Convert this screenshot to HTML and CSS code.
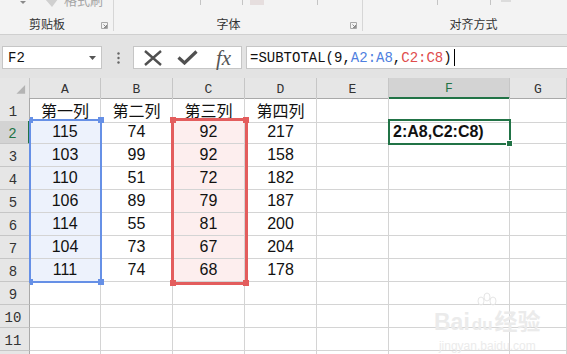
FILE: index.html
```html
<!DOCTYPE html>
<html lang="zh-CN">
<head>
    <meta charset="UTF-8">
    <meta name="viewport" content="width=device-width, initial-scale=1.0">
    <title>SUBTOTAL</title>
    <link rel="stylesheet" href="styles.css">
</head>
<body>
    <div class="ribbon">
        <div class="group clip">
            <div class="tools">
                <svg class="caret" width="6" height="4" viewBox="0 0 6 4"><path d="M0 0h6L3 3z" fill="#8a8a8a"/></svg>
                <svg class="brush" width="17" height="9" viewBox="0 0 17 9"><path d="M2 0h13L9 8z" fill="#d0d0d0"/></svg>
                <span class="cut-text">格式刷</span>
            </div>
            <div class="glabel">
                <span class="gname">剪贴板</span>
                <svg class="launcher" width="7" height="7" viewBox="0 0 7 7"><path d="M0.5 6.5V0.5h6v6z" fill="none" stroke="#a8a8a8"/><path d="M2.5 2.5l3 3M5.5 3v2.5H3" fill="none" stroke="#8a8a8a"/></svg>
            </div>
        </div>
        <div class="group font">
            <div class="tools">
                <span class="tick" style="margin-left: 86px"></span>
                <span class="tick" style="margin-left: 41px"></span>
                <span class="swatch"></span>
                <span class="tick" style="margin-left: 53px"></span>
            </div>
            <div class="glabel">
                <span class="gname">字体</span>
                <svg class="launcher" width="7" height="7" viewBox="0 0 7 7"><path d="M0.5 6.5V0.5h6v6z" fill="none" stroke="#a8a8a8"/><path d="M2.5 2.5l3 3M5.5 3v2.5H3" fill="none" stroke="#8a8a8a"/></svg>
            </div>
        </div>
        <div class="group align">
            <div class="tools">
                <span class="tick" style="margin-left: 74px"></span>
                <span class="tick" style="margin-left: 52px"></span>
                <span class="swatch grey"></span>
            </div>
            <div class="glabel">
                <span class="gname">对齐方式</span>
            </div>
        </div>
    </div>

    <div class="fbar">
        <div class="namebox">
            <span>F2</span>
            <svg width="7" height="4" viewBox="0 0 7 4"><path d="M0 0h7L3.5 4z" fill="#555"/></svg>
        </div>
        <svg class="dots" width="3" height="12" viewBox="0 0 3 12"><circle cx="1.5" cy="1.5" r="1.2" fill="#666"/><circle cx="1.5" cy="6" r="1.2" fill="#666"/><circle cx="1.5" cy="10.5" r="1.2" fill="#666"/></svg>
        <div class="fxbox">
            <svg class="ico-x" width="20" height="16" viewBox="0 0 20 16"><path d="M2 1l16 14M18 1L2 15" stroke="#505050" stroke-width="2.4" fill="none"/></svg>
            <svg class="ico-ok" width="21" height="15" viewBox="0 0 21 15"><path d="M1.5 7.5l6 5.5L19.5 1.5" stroke="#505050" stroke-width="3.2" fill="none"/></svg>
            <span class="fx">fx</span>
        </div>
        <div class="finput">
            <span>=SUBTOTAL(9,<span class="ref-blue">A2:A8</span>,<span class="ref-red">C2:C8</span>)</span><span class="caret-line"></span>
        </div>
    </div>

    <div class="sheet">
        <div class="row head">
            <div class="cell corner">
                <svg width="30" height="20" viewBox="0 0 30 20"><path d="M26 7v9h-9z" fill="#b4b4b4"/></svg>
            </div>
            <div class="cell ch">A</div>
            <div class="cell ch">B</div>
            <div class="cell ch">C</div>
            <div class="cell ch">D</div>
            <div class="cell ch">E</div>
            <div class="cell ch sel">F</div>
            <div class="cell ch">G</div>
        </div>
        <div class="row">
            <div class="cell rh">1</div>
            <div class="cell">第一列</div>
            <div class="cell">第二列</div>
            <div class="cell">第三列</div>
            <div class="cell">第四列</div>
            <div class="cell"></div>
            <div class="cell"></div>
            <div class="cell"></div>
        </div>
        <div class="row">
            <div class="cell rh sel">2</div>
            <div class="cell blue">115</div>
            <div class="cell">74</div>
            <div class="cell red">92</div>
            <div class="cell">217</div>
            <div class="cell"></div>
            <div class="cell edit">2:A8,C2:C8)</div>
            <div class="cell"></div>
        </div>
        <div class="row">
            <div class="cell rh">3</div>
            <div class="cell blue">103</div>
            <div class="cell">99</div>
            <div class="cell red">92</div>
            <div class="cell">158</div>
            <div class="cell"></div>
            <div class="cell"></div>
            <div class="cell"></div>
        </div>
        <div class="row">
            <div class="cell rh">4</div>
            <div class="cell blue">110</div>
            <div class="cell">51</div>
            <div class="cell red">72</div>
            <div class="cell">182</div>
            <div class="cell"></div>
            <div class="cell"></div>
            <div class="cell"></div>
        </div>
        <div class="row">
            <div class="cell rh">5</div>
            <div class="cell blue">106</div>
            <div class="cell">89</div>
            <div class="cell red">79</div>
            <div class="cell">187</div>
            <div class="cell"></div>
            <div class="cell"></div>
            <div class="cell"></div>
        </div>
        <div class="row">
            <div class="cell rh">6</div>
            <div class="cell blue">114</div>
            <div class="cell">55</div>
            <div class="cell red">81</div>
            <div class="cell">200</div>
            <div class="cell"></div>
            <div class="cell"></div>
            <div class="cell"></div>
        </div>
        <div class="row">
            <div class="cell rh">7</div>
            <div class="cell blue">104</div>
            <div class="cell">73</div>
            <div class="cell red">67</div>
            <div class="cell">204</div>
            <div class="cell"></div>
            <div class="cell"></div>
            <div class="cell"></div>
        </div>
        <div class="row">
            <div class="cell rh">8</div>
            <div class="cell blue">111</div>
            <div class="cell">74</div>
            <div class="cell red">68</div>
            <div class="cell">178</div>
            <div class="cell"></div>
            <div class="cell"></div>
            <div class="cell"></div>
        </div>
        <div class="row">
            <div class="cell rh">9</div>
            <div class="cell"></div><div class="cell"></div><div class="cell"></div><div class="cell"></div>
            <div class="cell"></div><div class="cell"></div><div class="cell"></div>
        </div>
        <div class="row">
            <div class="cell rh">10</div>
            <div class="cell"></div><div class="cell"></div><div class="cell"></div><div class="cell"></div>
            <div class="cell"></div><div class="cell"></div><div class="cell"></div>
        </div>
        <div class="row">
            <div class="cell rh">11</div>
            <div class="cell"></div><div class="cell"></div><div class="cell"></div><div class="cell"></div>
            <div class="cell"></div><div class="cell"></div><div class="cell"></div>
        </div>
        <div class="row">
            <div class="cell rh"></div>
            <div class="cell"></div><div class="cell"></div><div class="cell"></div><div class="cell"></div>
            <div class="cell"></div><div class="cell"></div><div class="cell"></div>
        </div>

        <!-- range highlights drawn over the grid -->
        <div class="range range-blue">
            <span class="knob tl"></span><span class="knob tr"></span>
            <span class="knob bl"></span><span class="knob br"></span>
        </div>
        <div class="range range-red">
            <span class="knob tl"></span><span class="knob tr"></span>
            <span class="knob bl"></span><span class="knob br"></span>
        </div>
        <div class="active"><span class="fill-handle"></span></div>

        <div class="watermark">
            <svg class="paw" width="30" height="18" viewBox="0 0 30 18">
                <ellipse cx="9" cy="9" rx="3" ry="4" fill="none" stroke="#e6e6e6"/>
                <ellipse cx="15" cy="5" rx="3" ry="4" fill="none" stroke="#e6e6e6"/>
                <ellipse cx="21" cy="9" rx="3" ry="4" fill="none" stroke="#e6e6e6"/>
            </svg>
            <div class="wm-logo">Bai<span class="wm-du">du</span>经验</div>
            <div class="wm-url">jingyan.baidu.com</div>
        </div>
    </div>
</body>
</html>
```

FILE: styles.css
```css
body {
    margin: 0;
    width: 567px;
    height: 354px;
    overflow: hidden;
    background-color: #fff;
    font-family: "Liberation Sans", "Noto Sans CJK SC", sans-serif;
    color: #111;
}

/* ribbon */
.ribbon {
    height: 34px;
    display: flex;
    overflow: hidden;
    background-color: #f3f3f3;
    border-bottom: 1px solid #cfcfcf;
}
.group {
    flex: none;
    height: 31px;
    display: flex;
    flex-direction: column;
}
.group.clip {
    width: 113px;
    border-right: 1px solid #d6d6d6;
}
.group.font {
    width: 248px;
    border-right: 1px solid #d6d6d6;
}
.group.align {
    width: 240px;
}
.tools {
    height: 16px;
    display: flex;
    align-items: flex-start;
}
.caret {
    margin-left: 20px;
    margin-top: 1px;
}
.brush {
    margin-left: 17px;
    margin-top: -1px;
}
.cut-text {
    margin-left: 4px;
    margin-top: -6px;
    font-size: 13px;
    line-height: 13px;
    color: #a6a6a6;
}
.tick {
    width: 1px;
    height: 5px;
    background-color: #c4c4c4;
}
.swatch {
    width: 14px;
    height: 5px;
    margin-left: 7px;
    background-color: #e6dede;
}
.swatch.grey {
    width: 10px;
    height: 2px;
    margin-left: 10px;
    background-color: #dcdcdc;
}
.glabel {
    height: 15px;
    display: grid;
    grid-template-columns: 1fr auto 1fr;
    align-items: center;
    font-size: 12px;
    line-height: 15px;
    color: #333;
}
.gname {
    grid-column: 2;
    margin-right: 19px;
    font-family: "Noto Sans CJK SC", sans-serif;
}
.launcher {
    grid-column: 3;
    justify-self: end;
    margin-right: 5px;
    margin-top: 4px;
}

/* formula bar */
.fbar {
    height: 43px;
    box-sizing: border-box;
    padding-top: 11px;
    display: flex;
    align-items: flex-start;
    background-color: #e3e3e3;
}
.namebox {
    width: 100px;
    height: 23px;
    margin-left: 2px;
    box-sizing: border-box;
    padding: 0 5px 0 5px;
    display: flex;
    align-items: center;
    justify-content: space-between;
    background-color: #fff;
    border: 1px solid #c6c6c6;
    font-family: "Liberation Mono", monospace;
    font-size: 14px;
}
.dots {
    margin-left: 15px;
    margin-top: 6px;
}
.fxbox {
    width: 109px;
    height: 23px;
    margin-left: 13px;
    box-sizing: border-box;
    display: flex;
    align-items: center;
    background-color: #fff;
    border: 1px solid #c6c6c6;
}
.ico-x {
    margin-left: 9px;
}
.ico-ok {
    margin-left: 14px;
}
.fx {
    margin-left: 18px;
    font-family: "Liberation Serif", serif;
    font-style: italic;
    font-size: 21px;
    line-height: 20px;
    color: #555;
}
.finput {
    flex: 1;
    height: 23px;
    margin-left: 4px;
    box-sizing: border-box;
    padding-left: 3px;
    display: flex;
    align-items: center;
    background-color: #fff;
    border: 1px solid #c6c6c6;
    border-right: none;
    font-family: "Liberation Mono", monospace;
    font-size: 14px;
    color: #111;
}
.ref-blue {
    color: #4f7fe0;
}
.ref-red {
    color: #e04c4c;
}
.caret-line {
    width: 1px;
    height: 17px;
    margin-left: 2px;
    background-color: #000;
}

/* sheet */
.sheet {
    position: relative;
}
.row {
    height: 23px;
    display: grid;
    grid-template-columns: 30px 71px 72px 72px 72px 72px 121px 57px;
}
.row.head {
    height: 20px;
}
.cell {
    box-sizing: border-box;
    display: flex;
    align-items: center;
    justify-content: center;
    white-space: nowrap;
    font-size: 16px;
    border-right: 1px solid #d4d4d4;
    border-bottom: 1px solid #d4d4d4;
}
.corner {
    background-color: #e6e6e6;
    border-right: 1px solid #c6c6c6;
    border-bottom: 1px solid #a9a9a9;
}
.ch {
    padding-top: 2px;
    background-color: #e6e6e6;
    border-right: 1px solid #c6c6c6;
    border-bottom: 1px solid #a9a9a9;
    font-family: "Liberation Mono", monospace;
    font-size: 13px;
    color: #333;
}
.rh {
    padding-right: 3px;
    padding-top: 3px;
    background-color: #e6e6e6;
    border-right: 1px solid #a9a9a9;
    border-bottom: 1px solid #c6c6c6;
    font-family: "Liberation Mono", monospace;
    font-size: 14px;
    color: #333;
}
.ch.sel {
    background-color: #d3d3d3;
    color: #217346;
    border-bottom: 2px solid #217346;
}
.rh.sel {
    background-color: #d3d3d3;
    color: #217346;
    border-right: 2px solid #217346;
}
.blue {
    background-color: #edf2fc;
}
.red {
    background-color: #fdeeee;
}
.edit {
    justify-content: flex-start;
    padding-left: 4px;
    font-weight: bold;
    overflow: visible;
}

/* overlays */
.range {
    position: absolute;
    box-sizing: border-box;
}
.range-blue {
    left: 29px;
    top: 41px;
    width: 73px;
    height: 164px;
    border: 2px solid #6690e6;
}
.range-red {
    left: 171px;
    top: 40px;
    width: 77px;
    height: 167px;
    border: 3px solid #e35d5d;
}
.knob {
    position: absolute;
    width: 6px;
    height: 6px;
}
.range-blue .knob {
    background-color: #6690e6;
}
.range-red .knob {
    background-color: #e35d5d;
}
.knob.tl { top: -4px; left: -4px; }
.knob.tr { top: -4px; right: -4px; }
.knob.bl { bottom: -4px; left: -4px; }
.knob.br { bottom: -4px; right: -4px; }
.range-blue .knob.tl,
.range-blue .knob.bl {
    width: 3px;
    left: -1px;
}
.active {
    position: absolute;
    left: 388px;
    top: 41px;
    width: 123px;
    height: 26px;
    box-sizing: border-box;
    border: 2px solid #217346;
}
.fill-handle {
    position: absolute;
    right: -4px;
    bottom: -4px;
    width: 5px;
    height: 5px;
    background-color: #217346;
    border: 1px solid #fff;
}

.watermark {
    position: absolute;
    left: 434px;
    top: 214px;
    display: flex;
    flex-direction: column;
    align-items: center;
    color: #ebebeb;
}
.wm-logo {
    font-size: 23px;
    line-height: 24px;
    font-weight: bold;
}
.wm-du {
    font-size: 17px;
    margin: 0 2px;
}
.wm-url {
    font-size: 12px;
    line-height: 14px;
    margin-top: 2px;
}
```
